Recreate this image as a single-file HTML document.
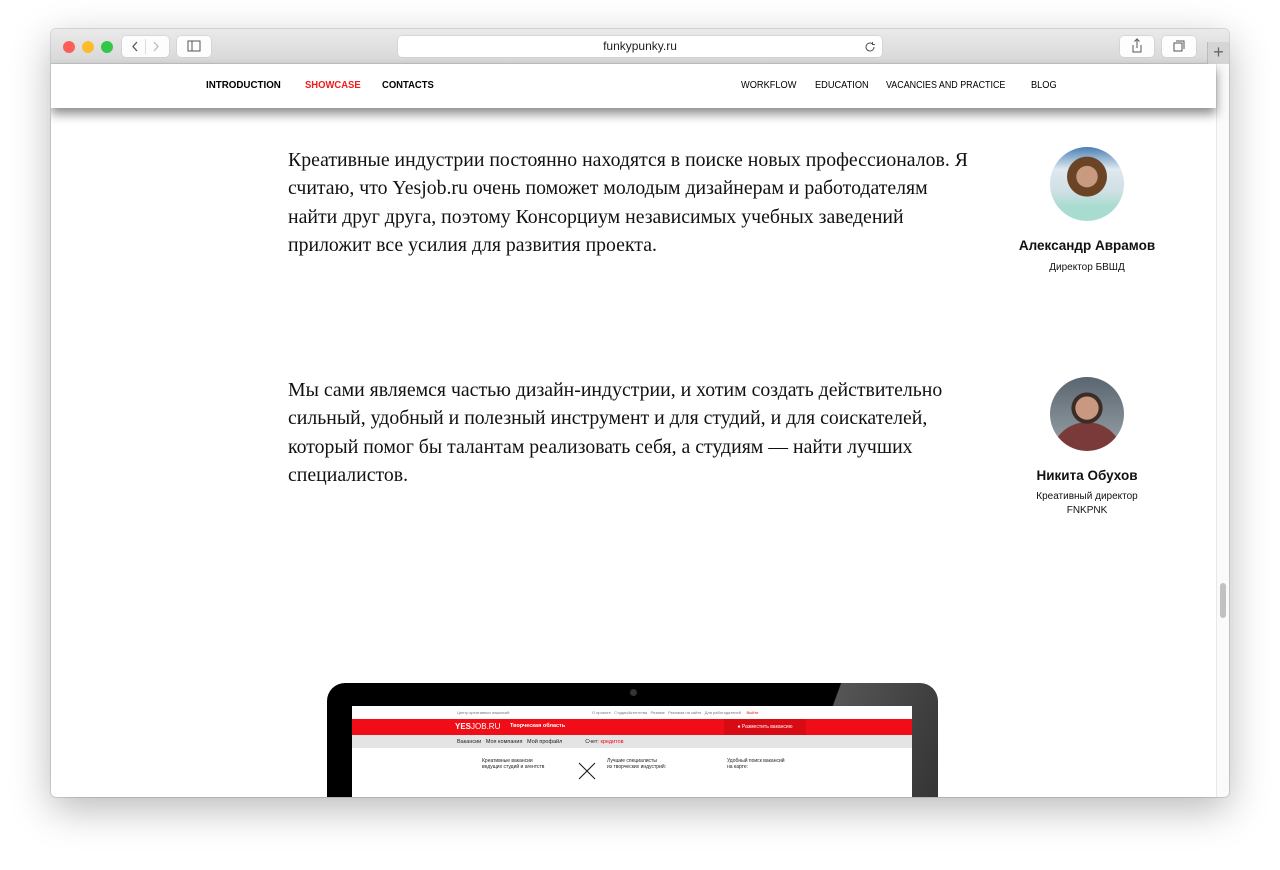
<!DOCTYPE html>
<html><head><meta charset="utf-8"><style>
*{margin:0;padding:0;box-sizing:border-box}
body{width:1280px;height:870px;background:#fff;position:relative;overflow:hidden;font-family:"Liberation Sans",sans-serif}
.win{position:absolute;left:51px;top:29px;width:1178px;height:768px;background:#fff;border-radius:5px;overflow:hidden;box-shadow:0 12px 40px rgba(0,0,0,.28),0 0 0 1px rgba(0,0,0,.12)}
.tb{position:absolute;left:0;top:0;width:100%;height:35px;background:linear-gradient(#ebeaeb,#d8d7d8);border-bottom:1px solid #c4c3c4}
.dot{position:absolute;top:12px;width:12px;height:12px;border-radius:50%}
.btn{position:absolute;top:7px;height:21px;background:#fdfdfd;border-radius:4px;box-shadow:0 0 0 .5px #c8c8c8}
.url{position:absolute;left:347px;top:7px;width:484px;height:21px;background:#fff;border-radius:4px;box-shadow:0 0 0 .5px #c8c8c8;font-size:12px;text-align:center;line-height:21px;color:#222}
.nav{position:absolute;left:0;top:35px;width:1165px;height:44px;background:#fff;box-shadow:0 6px 10px rgba(0,0,0,.45);z-index:2}
.nav span{position:absolute;top:15px;font-size:10.5px;transform-origin:left top;white-space:nowrap}
.b{font-weight:bold}
p.t{position:absolute;left:237px;width:690px;font-family:"Liberation Serif",serif;font-size:19.8px;line-height:28.4px;color:#111}
.av{position:absolute;width:74px;height:74px;border-radius:50%}
.nm{position:absolute;width:200px;text-align:center;font-weight:bold;font-size:13.5px;color:#111}
.rl{position:absolute;width:200px;text-align:center;font-size:10px;line-height:14px;color:#111}
.sb{position:absolute;left:1165px;top:35px;width:13px;height:733px;background:#fafafa;border-left:1px solid #e8e8e8}
</style></head><body>
<div class="win">
<div class="tb">
<div class="dot" style="left:12px;background:#fc5f57"></div>
<div class="dot" style="left:31px;background:#fdbc2e"></div>
<div class="dot" style="left:50px;background:#33c748"></div>
<div class="btn" style="left:71px;width:47px"><svg width="47" height="21"><path d="M15 6l-4 4.5 4 4.5" stroke="#555" fill="none" stroke-width="1.3"/><line x1="23.5" y1="3" x2="23.5" y2="18" stroke="#ddd"/><path d="M32 6l4 4.5-4 4.5" stroke="#bbb" fill="none" stroke-width="1.3"/></svg></div>
<div class="btn" style="left:126px;width:34px"><svg width="34" height="21"><rect x="11" y="5" width="12" height="10" stroke="#555" fill="none"/><line x1="15" y1="5" x2="15" y2="15" stroke="#555"/></svg></div>
<div class="url">funkypunky.ru<svg style="position:absolute;right:6px;top:5px" width="12" height="12"><path d="M10 6a4 4 0 1 1-1.5-3.1M8.5 1v2.5H11" stroke="#555" fill="none"/></svg></div>
<div class="btn" style="left:1069px;width:34px"><svg width="34" height="21"><path d="M13 9v7h8V9M17 3v9M14.5 5.5L17 3l2.5 2.5" stroke="#555" fill="none"/></svg></div>
<div class="btn" style="left:1111px;width:34px"><svg width="34" height="21"><rect x="12" y="7" width="8" height="8" stroke="#555" fill="none"/><path d="M14 5h8v8" stroke="#555" fill="none"/></svg></div>
<div style="position:absolute;left:1156px;top:13px;width:22px;height:22px;background:#d6d5d6;border-left:1px solid #bbb;font-size:18px;color:#666;text-align:center;line-height:21px">+</div>
</div>
<div class="nav">
<span class="b" style="left:155px;transform:scaleX(.93)">INTRODUCTION</span>
<span class="b" style="left:254px;color:#f21a1a;transform:scaleX(.9)">SHOWCASE</span>
<span class="b" style="left:331px;transform:scaleX(.9)">CONTACTS</span>
<span style="left:690px;transform:scaleX(.88)">WORKFLOW</span>
<span style="left:764px;transform:scaleX(.88)">EDUCATION</span>
<span style="left:835px;transform:scaleX(.85)">VACANCIES AND PRACTICE</span>
<span style="left:980px;transform:scaleX(.88)">BLOG</span>
</div>
<p class="t" style="top:117px">Креативные индустрии постоянно находятся в поиске новых профессионалов. Я считаю, что Yesjob.ru очень поможет молодым дизайнерам и работодателям найти друг друга, поэтому Консорциум независимых учебных заведений приложит все усилия для развития проекта.</p>
<p class="t" style="top:347px">Мы сами являемся частью дизайн-индустрии, и хотим создать действительно сильный, удобный и полезный инструмент и для студий, и для соискателей, который помог бы талантам реализовать себя, а студиям — найти лучших специалистов.</p>
<div class="av" style="left:999px;top:118px;background:radial-gradient(circle at 50% 40%,#c89a80 0 18%,#6b4426 19% 34%,transparent 35%),linear-gradient(#4a7fb5 0,#dfe8ef 30%,#cfe0e4 60%,#a8dcd0 80%)"></div>
<div class="nm" style="left:936px;top:209px">Александр Аврамов</div>
<div class="rl" style="left:936px;top:232px">Директор БВШД</div>
<div class="av" style="left:999px;top:348px;background:radial-gradient(circle at 50% 42%,#c99880 0 20%,#3a2c26 21% 27%,transparent 28%),radial-gradient(circle at 50% 110%,#7b3a3a 0 40%,transparent 41%),linear-gradient(#5a6670,#9aa3a8)"></div>
<div class="nm" style="left:936px;top:439px">Никита Обухов</div>
<div class="rl" style="left:936px;top:461px">Креативный директор<br>FNKPNK</div>
<div style="position:absolute;left:276px;top:654px;width:611px;height:130px;background:linear-gradient(110deg,#000 78%,#555 78.2%,#333);border-radius:18px 18px 0 0"></div>
<div style="position:absolute;left:579px;top:660px;width:7px;height:7px;border-radius:50%;background:#333"></div>
<div style="position:absolute;left:301px;top:677px;width:560px;height:100px;background:#fff;font-size:5px;color:#555">
<div style="position:absolute;left:105px;top:4px;font-size:4px;color:#777">Центр креативных вакансий</div>
<div style="position:absolute;left:240px;top:4px;font-size:4px;color:#777">О проекте &nbsp; Студии/Агентства &nbsp; Резюме &nbsp; Реклама на сайте &nbsp; Для работодателей &nbsp;&nbsp;&nbsp; <span style="color:#f10d17">Выйти</span></div>
<div style="position:absolute;left:0;top:13px;width:100%;height:16px;background:#f10d17"></div>
<div style="position:absolute;left:103px;top:16px;color:#fff;font-weight:bold;font-size:8px">YES<span style="font-weight:normal">JOB.RU</span></div>
<div style="position:absolute;left:158px;top:17px;color:#fff;font-weight:bold;font-size:5.5px">Творческая область</div>
<div style="position:absolute;left:372px;top:13px;width:82px;height:16px;background:#d80a13;color:#fff;font-size:5px;line-height:16px;text-align:center">● Разместить вакансию</div>
<div style="position:absolute;left:0;top:29px;width:100%;height:13px;background:#e4e4e4"></div>
<div style="position:absolute;left:105px;top:33px;font-size:5.5px;color:#222">Вакансии &nbsp; Моя компания &nbsp; Мой профайл &nbsp;&nbsp;&nbsp;&nbsp;&nbsp;&nbsp;&nbsp;&nbsp;&nbsp;&nbsp;&nbsp;&nbsp;&nbsp; Счет: <span style="color:#f10d17">кредитов</span></div>
<div style="position:absolute;left:130px;top:52px;font-size:5px;color:#222">Креативные вакансии<br>ведущих студий и агентств</div>
<div style="position:absolute;left:255px;top:52px;font-size:5px;color:#222">Лучшие специалисты<br>из творческих индустрий:</div>
<div style="position:absolute;left:375px;top:52px;font-size:5px;color:#222">Удобный поиск вакансий<br>на карте:</div>
<svg style="position:absolute;left:225px;top:55px" width="20" height="20"><path d="M2 2L18 18M18 2L2 18" stroke="#111"/></svg>
</div>
<div class="sb"><div style="position:absolute;left:3px;top:519px;width:6px;height:35px;border-radius:3px;background:#c1c1c1"></div></div>
</div>
</body></html>
